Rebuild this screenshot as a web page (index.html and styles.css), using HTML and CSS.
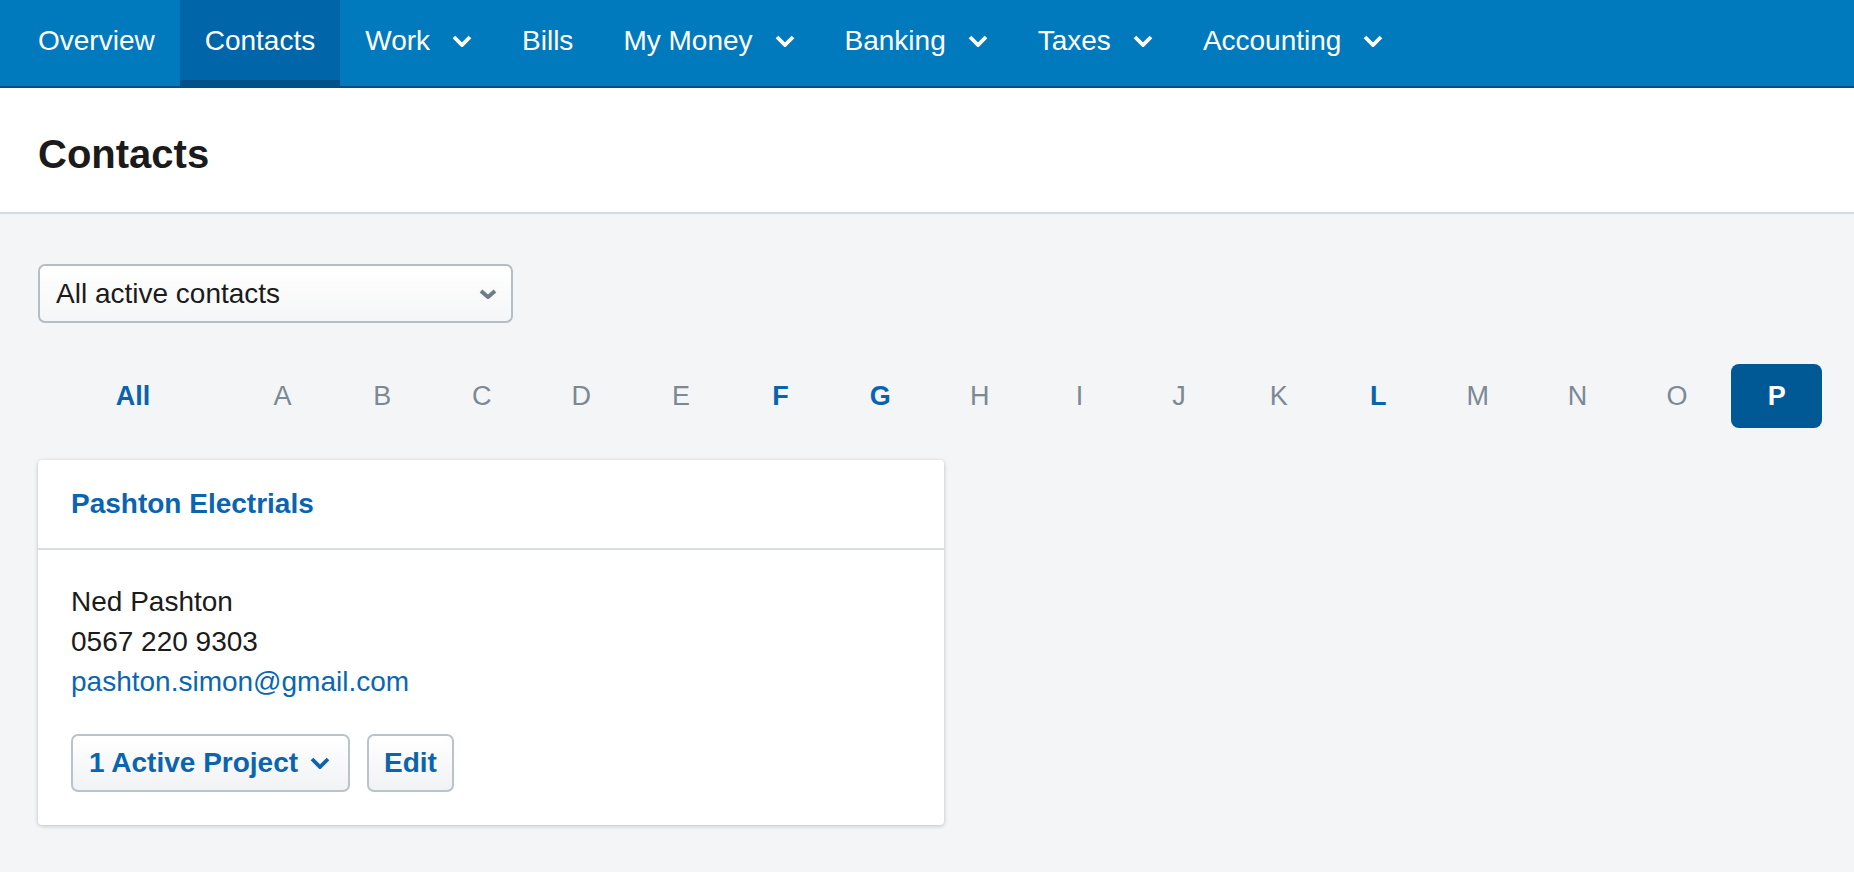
FILE: index.html
```html
<!DOCTYPE html>
<html lang="en">
<head>
  <meta charset="UTF-8">
  <title>Contacts</title>
  <link rel="stylesheet" href="styles.css">
</head>
<body>
  <!-- Top navigation -->
  <nav class="topnav">
    <a class="nav-item" href="#">Overview</a>
    <a class="nav-item active" href="#">Contacts</a>
    <a class="nav-item" href="#">Work <svg class="chev" viewBox="0 0 20 12"><path d="M2 2 L10 10 L18 2"/></svg></a>
    <a class="nav-item" href="#">Bills</a>
    <a class="nav-item" href="#">My Money <svg class="chev" viewBox="0 0 20 12"><path d="M2 2 L10 10 L18 2"/></svg></a>
    <a class="nav-item" href="#">Banking <svg class="chev" viewBox="0 0 20 12"><path d="M2 2 L10 10 L18 2"/></svg></a>
    <a class="nav-item" href="#">Taxes <svg class="chev" viewBox="0 0 20 12"><path d="M2 2 L10 10 L18 2"/></svg></a>
    <a class="nav-item" href="#">Accounting <svg class="chev" viewBox="0 0 20 12"><path d="M2 2 L10 10 L18 2"/></svg></a>
  </nav>

  <!-- Page title -->
  <header class="page-header">
    <h1>Contacts</h1>
  </header>

  <main class="content">
    <!-- Filter -->
    <div class="select-box">
      <span>All active contacts</span>
      <svg class="select-chev" viewBox="0 0 18 10"><path d="M2 2 L9 8 L16 2"/></svg>
    </div>

    <!-- Alphabet filter -->
    <div class="alphabet">
      <a class="letter all has" href="#">All</a>
      <a class="letter" href="#">A</a>
      <a class="letter" href="#">B</a>
      <a class="letter" href="#">C</a>
      <a class="letter" href="#">D</a>
      <a class="letter" href="#">E</a>
      <a class="letter has" href="#">F</a>
      <a class="letter has" href="#">G</a>
      <a class="letter" href="#">H</a>
      <a class="letter" href="#">I</a>
      <a class="letter" href="#">J</a>
      <a class="letter" href="#">K</a>
      <a class="letter has" href="#">L</a>
      <a class="letter" href="#">M</a>
      <a class="letter" href="#">N</a>
      <a class="letter" href="#">O</a>
      <a class="letter selected" href="#">P</a>
    </div>

    <!-- Contact card -->
    <div class="card">
      <div class="card-header">
        <a href="#">Pashton Electrials</a>
      </div>
      <div class="card-body">
        <div>Ned Pashton</div>
        <div>0567 220 9303</div>
        <a class="email" href="#">pashton.simon@gmail.com</a>
        <div class="card-actions">
          <button class="btn">1 Active Project <svg class="btn-chev" viewBox="0 0 20 12"><path d="M2 2 L10 10 L18 2"/></svg></button>
          <button class="btn">Edit</button>
        </div>
      </div>
    </div>
  </main>
</body>
</html>
```

FILE: styles.css
```css
/* General */
body {
  margin: 0;
  font-family: 'Liberation Sans', Arial, sans-serif;
  background-color: #f4f5f7;
  color: #1b1b1b;
}

a {
  text-decoration: none;
}

/* Top navigation */
.topnav {
  display: flex;
  height: 86px;
  padding-left: 13px;
  background-color: #0079bd;
  border-bottom: 2px solid #004f80;
}

.nav-item {
  display: flex;
  align-items: center;
  padding: 0 25px 4px;
  font-size: 28px;
  color: #ffffff;
}

.nav-item.active {
  background-color: #0066a9;
  box-shadow: inset 0 -6px 0 #00508a;
}

.chev {
  width: 20px;
  height: 12px;
  margin-left: 22px;
  fill: none;
  stroke: #ffffff;
  stroke-width: 3.8;
}

/* Page header */
.page-header {
  background: #ffffff;
  border-bottom: 2px solid #d6dbe0;
  padding: 42px 38px 34px;
}

.page-header h1 {
  margin: 0;
  font-size: 40px;
  line-height: 48px;
  font-weight: bold;
  color: #1b1b1b;
}

/* Main content */
.content {
  padding: 50px 32px 40px 38px;
}

.select-box {
  display: flex;
  align-items: center;
  justify-content: space-between;
  box-sizing: border-box;
  width: 475px;
  height: 59px;
  padding: 0 14px 0 16px;
  border: 2px solid #b6bec5;
  border-radius: 7px;
  background: linear-gradient(#ffffff, #f5f6f7);
  font-size: 28px;
  color: #1b1b1b;
}

.select-chev {
  width: 18px;
  height: 10px;
  fill: none;
  stroke: #6f7c87;
  stroke-width: 4;
}

/* Alphabet */
.alphabet {
  display: grid;
  grid-template-columns: repeat(18, 1fr);
  column-gap: 9px;
  margin-top: 41px;
}

.letter {
  display: flex;
  align-items: center;
  justify-content: center;
  height: 64px;
  font-size: 27px;
  color: #7b8994;
  border-radius: 8px;
}

.letter.all {
  grid-column: span 2;
}

.letter.has {
  color: #0a64ab;
  font-weight: bold;
}

.letter.selected {
  background-color: #005894;
  color: #ffffff;
  font-weight: bold;
}

/* Card */
.card {
  width: 906px;
  margin-top: 32px;
  background: #ffffff;
  border-radius: 4px;
  box-shadow: 0 1px 4px rgba(0, 0, 0, 0.22);
}

.card-header {
  display: flex;
  align-items: center;
  height: 88px;
  padding: 0 33px;
  border-bottom: 2px solid #d7dde2;
}

.card-header a {
  font-size: 28px;
  font-weight: bold;
  color: #0b65ae;
}

.card-body {
  padding: 32px 33px 33px;
  font-size: 28px;
  line-height: 40px;
}

.email {
  display: block;
  color: #0a66b0;
}

.card-actions {
  display: flex;
  gap: 17px;
  margin-top: 32px;
}

.btn {
  display: flex;
  align-items: center;
  height: 58px;
  padding: 0 15px;
  border: 2px solid #b9c3ca;
  border-radius: 7px;
  background: linear-gradient(#ffffff, #f0f2f4);
  font-family: inherit;
  font-size: 28px;
  font-weight: bold;
  color: #0b65ae;
}

.btn:first-child {
  padding: 0 18px 0 16px;
}

.btn-chev {
  width: 20px;
  height: 12px;
  margin-left: 12px;
  fill: none;
  stroke: #0b65ae;
  stroke-width: 3.8;
}
```
